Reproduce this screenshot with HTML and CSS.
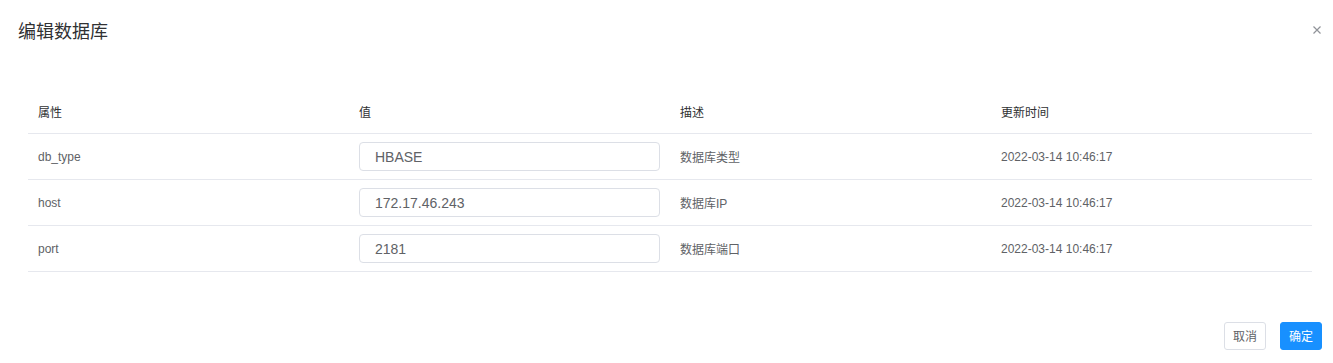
FILE: index.html
```html
<!DOCTYPE html>
<html lang="zh-CN">
<head>
  <meta charset="UTF-8">
  <title>编辑数据库</title>
  <link rel="stylesheet" href="styles.css">
</head>
<body>

  <div class="dialog">
    <div class="dialog-header">
      <span class="dialog-title">编辑数据库</span>
      <button type="button" class="close-btn" aria-label="关闭">
        <svg width="8" height="8" viewBox="0 0 8 8">
          <path d="M0.5 0.5 L7.5 7.5 M7.5 0.5 L0.5 7.5" stroke="#909399" stroke-width="1.2" fill="none"/>
        </svg>
      </button>
    </div>

    <div class="dialog-body">
      <table class="prop-table">
        <thead>
          <tr>
            <th>属性</th>
            <th>值</th>
            <th>描述</th>
            <th>更新时间</th>
          </tr>
        </thead>
        <tbody>
          <tr>
            <td>db_type</td>
            <td><input type="text" class="cell-input" value="HBASE"></td>
            <td>数据库类型</td>
            <td>2022-03-14 10:46:17</td>
          </tr>
          <tr>
            <td>host</td>
            <td><input type="text" class="cell-input" value="172.17.46.243"></td>
            <td>数据库IP</td>
            <td>2022-03-14 10:46:17</td>
          </tr>
          <tr>
            <td>port</td>
            <td><input type="text" class="cell-input" value="2181"></td>
            <td>数据库端口</td>
            <td>2022-03-14 10:46:17</td>
          </tr>
        </tbody>
      </table>
    </div>

    <div class="dialog-footer">
      <button type="button" class="btn">取消</button>
      <button type="button" class="btn btn-primary">确定</button>
    </div>
  </div>

</body>
</html>
```

FILE: styles.css
```css
/* General Styles */
body {
  margin: 0;
  padding: 0;
  background-color: #ffffff;
  font-family: "Liberation Sans", "Noto Sans CJK SC", sans-serif;
  color: #606266;
}

.dialog {
  width: 100%;
}

/* Header */
.dialog-header {
  position: relative;
  padding: 20px 20px 10px 18px;
}

.dialog-title {
  display: block;
  font-size: 18px;
  line-height: 24px;
  color: #303133;
}

.close-btn {
  position: absolute;
  top: 26px;
  right: 12px;
  padding: 0;
  border: none;
  background: none;
  line-height: 0;
  cursor: pointer;
}

/* Table */
.dialog-body {
  padding: 36px 21px 0 28px;
}

.prop-table {
  width: 100%;
  border-collapse: collapse;
  table-layout: fixed;
  font-size: 12px;
}

.prop-table th,
.prop-table td {
  padding: 0 10px;
  text-align: left;
  border-bottom: 1px solid #e6e8ee;
  vertical-align: middle;
}

.prop-table th {
  height: 43px;
  font-weight: normal;
  color: #303133;
}

.prop-table td {
  height: 45px;
  color: #606266;
}

.cell-input {
  display: block;
  width: 100%;
  height: 29px;
  padding: 0 15px;
  box-sizing: border-box;
  border: 1px solid #dcdfe6;
  border-radius: 4px;
  font-family: "Liberation Sans", "Noto Sans CJK SC", sans-serif;
  font-size: 14px;
  color: #606266;
  background-color: #ffffff;
  outline: none;
}

.cell-input:focus {
  border-color: #1890ff;
}

/* Footer */
.dialog-footer {
  display: flex;
  justify-content: flex-end;
  gap: 14px;
  padding: 50px 11px 0 0;
}

.btn {
  padding: 7px 8px;
  font-family: "Noto Sans CJK SC", sans-serif;
  font-size: 12px;
  line-height: 12px;
  color: #606266;
  background-color: #ffffff;
  border: 1px solid #dcdfe6;
  border-radius: 3px;
  cursor: pointer;
}

.btn-primary {
  color: #ffffff;
  background-color: #1890ff;
  border-color: #1890ff;
}
```
